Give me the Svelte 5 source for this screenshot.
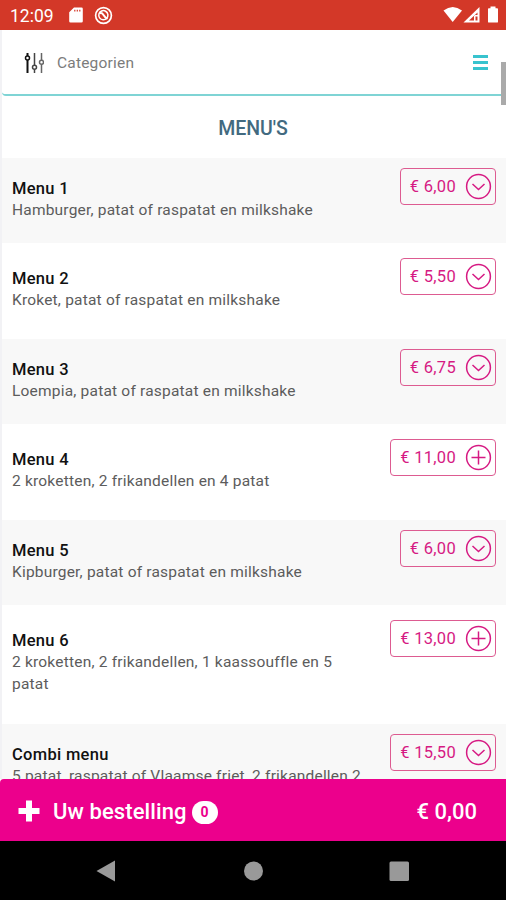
<script>
  const menus = [
    { name: "Menu 1", text: "Hamburger, patat of raspatat en milkshake", price: "6,00", options: true },
    { name: "Menu 2", text: "Kroket, patat of raspatat en milkshake", price: "5,50", options: true },
    { name: "Menu 3", text: "Loempia, patat of raspatat en milkshake", price: "6,75", options: true },
    { name: "Menu 4", text: "2 kroketten, 2 frikandellen en 4 patat", price: "11,00", options: false },
    { name: "Menu 5", text: "Kipburger, patat of raspatat en milkshake", price: "6,00", options: true },
    { name: "Menu 6", text: "2 kroketten, 2 frikandellen, 1 kaassouffle en 5 patat", price: "13,00", options: false },
    { name: "Combi menu", text: "5 patat, raspatat of Vlaamse friet, 2 frikandellen 2", price: "15,50", options: true },
  ];

  let count = 0;
  let total = "0,00";
</script>

<div class="phone">
  <div class="status">
    <span class="time">12:09</span>
    <svg class="sd" width="14" height="16" viewBox="0 0 14 16">
      <path d="M5 .5h7.500a1.300 1.300 0 0 1 1.300 1.300v12.400a1.300 1.300 0 0 1-1.300 1.300h-11A1.300 1.300 0 0 1 .2 14.200V5.200z" fill="#fff" />
      <path d="M5.800 2.800v1.600M8.300 2.800v1.600M10.800 2.800v1.600" stroke="#d33828" stroke-width="1.200" />
    </svg>
    <svg class="app" width="19" height="19" viewBox="0 0 19 19" fill="none" stroke="#fff">
      <circle cx="9.500" cy="9.500" r="7.900" stroke-width="1.700" />
      <path d="M12.800 12.300A4.600 4.600 0 1 1 13.900 8.500Q14 11 12.800 12.300" stroke-width="1.500" />
      <path d="M5.800 7.200Q8 6.500 9.500 9T13.500 12.800" stroke-width="2" />
    </svg>
    <svg class="signals" width="56" height="18" viewBox="0 0 56 18">
      <path d="M.5 4.500Q9.700-2.500 19 4.500L9.700 16z" fill="#fff" />
      <path d="M36.500 1v15.500H20.500z" fill="#fff" />
      <path d="M34.500 6.500V9h-3.500v5.500h-5z" fill="#d33828" />
      <path d="M32.500 10.500h2v4h-2z" fill="#d33828" />
      <path d="M47.500 .5h5v1.800h1.700a.8.8 0 0 1 .8.8v12.600a.9.9 0 0 1-.9.9h-8.200a.9.9 0 0 1-.9-.9V3.100a.8.8 0 0 1 .8-.8h1.700z" fill="#fff" />
    </svg>
  </div>

  <div class="page">
    <div class="categories">
      <svg class="sliders" width="20" height="22" viewBox="0 0 20 22" fill="none" stroke-width="1.500">
        <g stroke="#111"><path d="M3.500 1v3M3.500 8v13" stroke-width="2" /><circle cx="3.500" cy="6" r="2" fill="#fff" /></g>
        <g stroke="#444"><path d="M10.500 1v12M10.500 17.500V21" /><circle cx="10.500" cy="15.300" r="2" fill="#fff" /></g>
        <g stroke="#666"><path d="M17.500 1v7M17.500 12.500V21" /><circle cx="17.500" cy="10.300" r="2" fill="#fff" /></g>
      </svg>
      <span>Categorien</span>
      <div class="burger"><i></i><i></i><i></i></div>
    </div>

    <h2>MENU'S</h2>

    {#each menus as menu}
      <div class="item">
        <div class="info">
          <b>{menu.name}</b>
          <p>{menu.text}</p>
        </div>
        <button class="price">
          <span>€ {menu.price}</span>
          <svg width="27" height="27" viewBox="0 0 27 27" fill="none" stroke="#d61a83" stroke-width="1.500">
            <circle cx="13.500" cy="13.500" r="11.900" />
            {#if menu.options}
              <path d="M7.500 11l6 5.500 6-5.500" />
            {:else}
              <path d="M13.500 6.500v14M6.500 13.500h14" />
            {/if}
          </svg>
        </button>
      </div>
    {/each}
    <div class="scrollbar"></div>
  </div>

  <div class="order">
    <svg width="22" height="22" viewBox="0 0 22 22"><path d="M8 .5h6V8h7.500v6H14v7.500H8V14H.5V8H8z" fill="#fff" /></svg>
    <span class="label">Uw bestelling</span>
    <span class="badge">{count}</span>
    <span class="total">€ {total}</span>
  </div>

  <div class="nav">
    <svg width="506" height="58" viewBox="0 0 506 58" fill="#999">
      <path d="M96.500 29L115 18.500v21z" />
      <circle cx="253.500" cy="29" r="9.500" />
      <rect x="389.500" y="19.500" width="19.500" height="19.500" rx="1.500" />
    </svg>
  </div>
</div>

<style>
  :global(body) {
    margin: 0;
  }

  .phone {
    width: 506px;
    height: 900px;
    display: flex;
    flex-direction: column;
    overflow: hidden;
    font-family: Roboto, sans-serif;
    background: #fff;
  }

  .status {
    height: 30px;
    flex: none;
    box-sizing: border-box;
    display: flex;
    align-items: center;
    padding: 0 7px 0 10px;
    background: #d33828;
    color: #fff;
  }

  .time {
    width: 59px;
    font-size: 17.5px;
    line-height: 30px;
    padding-top: 1px;
  }

  .app {
    margin-left: 11px;
  }

  .signals {
    margin-left: auto;
  }

  .page {
    position: relative;
    flex: 1;
    min-height: 0;
    overflow: hidden;
    box-sizing: border-box;
    border-left: 2px solid #f2f2f5;
  }

  .categories {
    height: 66px;
    box-sizing: border-box;
    display: flex;
    align-items: center;
    padding: 1px 18px 0 22px;
    border-bottom: 2px solid #7fd4d5;
    border-bottom-left-radius: 4px;
    color: #7c7c7c;
    font-size: 15.5px;
    letter-spacing: 0.2px;
  }

  .categories span {
    margin-left: 13px;
    padding-top: 1px;
  }

  .sliders {
    margin-top: 1px;
  }

  .burger {
    width: 15px;
    margin-left: auto;
    display: flex;
    flex-direction: column;
    gap: 3px;
  }

  .burger i {
    height: 3px;
    background: #38c3ce;
  }

  h2 {
    height: 62px;
    margin: 0;
    padding: 2px 2px 0 0;
    box-sizing: border-box;
    line-height: 62px;
    text-align: center;
    font-size: 19.5px;
    font-weight: 500;
    color: #426a80;
  }

  .item {
    height: 85px;
    box-sizing: border-box;
    display: flex;
    justify-content: space-between;
    align-items: flex-start;
    padding: 10px 10px 0 10px;
    background: #f8f8f8;
  }

  .item:nth-of-type(odd) {
    height: 96px;
    padding-top: 15px;
    background: #fff;
  }

  .item:nth-of-type(7) {
    height: 119px;
  }

  .info {
    width: 355px;
    padding-top: 11px;
  }

  .info b {
    display: block;
    font-size: 16.5px;
    font-weight: 500;
    line-height: 20px;
    letter-spacing: 0.3px;
    color: #111;
  }

  .info p {
    margin: 0;
    font-size: 15.5px;
    line-height: 22px;
    letter-spacing: 0.2px;
    color: #5c5c5c;
  }

  .price {
    height: 37px;
    box-sizing: border-box;
    display: flex;
    align-items: center;
    gap: 9px;
    padding: 0 3px 0 9px;
    border: 1.5px solid #dd5b91;
    border-radius: 4px;
    background: transparent;
    font-family: inherit;
    font-size: 16.5px;
    letter-spacing: 0.3px;
    color: #d61a83;
  }

  .scrollbar {
    position: absolute;
    top: 32px;
    right: 0;
    width: 5px;
    height: 43px;
    background: #aaa;
  }

  .order {
    height: 62px;
    flex: none;
    box-sizing: border-box;
    display: flex;
    align-items: center;
    padding: 2px 29px 0 18px;
    background: #ec008c;
    border-top-left-radius: 4px;
    color: #fff;
    font-size: 22px;
    font-weight: 500;
  }

  .label {
    margin-left: 13px;
    letter-spacing: 0.1px;
  }

  .badge {
    width: 26px;
    height: 23px;
    margin: 3px 0 0 5px;
    border-radius: 12px;
    background: #fff;
    color: #ec008c;
    font-size: 14px;
    font-weight: 700;
    line-height: 23px;
    text-align: center;
  }

  .total {
    margin-left: auto;
  }

  .nav {
    height: 59px;
    flex: none;
    box-sizing: border-box;
    padding-top: 1px;
    background: #000;
  }
</style>
